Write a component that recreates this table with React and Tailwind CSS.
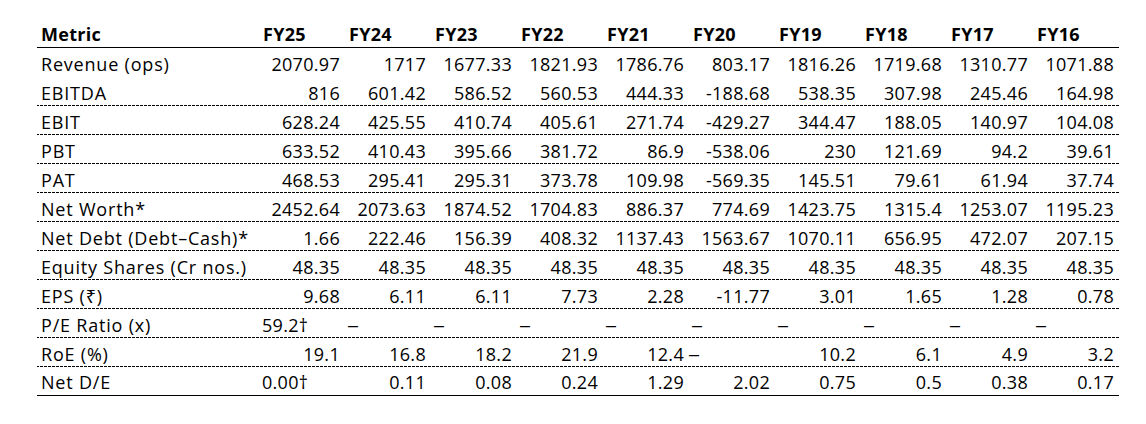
import React from "react";

const years = ["FY25", "FY24", "FY23", "FY22", "FY21", "FY20", "FY19", "FY18", "FY17", "FY16"];

const L = (t) => ({ t, left: true });
const D = { t: "–", left: true, dash: true };

const rows = [
  { label: "Revenue (ops)", border: "none", v: ["2070.97", "1717", "1677.33", "1821.93", "1786.76", "803.17", "1816.26", "1719.68", "1310.77", "1071.88"] },
  { label: "EBITDA", border: "dash", v: ["816", "601.42", "586.52", "560.53", "444.33", "-188.68", "538.35", "307.98", "245.46", "164.98"] },
  { label: "EBIT", border: "dash", v: ["628.24", "425.55", "410.74", "405.61", "271.74", "-429.27", "344.47", "188.05", "140.97", "104.08"] },
  { label: "PBT", border: "dash", v: ["633.52", "410.43", "395.66", "381.72", "86.9", "-538.06", "230", "121.69", "94.2", "39.61"] },
  { label: "PAT", border: "dash", v: ["468.53", "295.41", "295.31", "373.78", "109.98", "-569.35", "145.51", "79.61", "61.94", "37.74"] },
  { label: "Net Worth*", border: "dash", v: ["2452.64", "2073.63", "1874.52", "1704.83", "886.37", "774.69", "1423.75", "1315.4", "1253.07", "1195.23"] },
  { label: "Net Debt (Debt–Cash)*", border: "dash", v: ["1.66", "222.46", "156.39", "408.32", "1137.43", "1563.67", "1070.11", "656.95", "472.07", "207.15"] },
  { label: "Equity Shares (Cr nos.)", border: "dash", v: ["48.35", "48.35", "48.35", "48.35", "48.35", "48.35", "48.35", "48.35", "48.35", "48.35"] },
  { label: "EPS (₹)", border: "dash", v: ["9.68", "6.11", "6.11", "7.73", "2.28", "-11.77", "3.01", "1.65", "1.28", "0.78"] },
  { label: "P/E Ratio (x)", border: "dash", v: [L("59.2†"), D, D, D, D, D, D, D, D, D] },
  { label: "RoE (%)", border: "dash", v: ["19.1", "16.8", "18.2", "21.9", "12.4", { t: "–", left: true, dash: true, shift: true }, "10.2", "6.1", "4.9", "3.2"] },
  { label: "Net D/E", border: "solid", v: [L("0.00†"), "0.11", "0.08", "0.24", "1.29", "2.02", "0.75", "0.5", "0.38", "0.17"] },
];

const gridCols = "grid grid-cols-[222px_repeat(10,86px)]";

function rowBorder(b) {
  if (b === "solid") return "border-b border-black";
  if (b === "dash")
    return "bg-[linear-gradient(to_right,#000_3px,transparent_3px)] bg-[length:4px_1px] bg-repeat-x bg-bottom";
  return "";
}

export default function App() {
  return (
    <div className="w-[1146px] h-[424px] bg-white pl-[37px] pt-[19px] text-black font-['Open_Sans','Noto_Sans',sans-serif] text-[18px] tracking-[0.3px]">
      <div className="w-[1082px]">
        <div className={`${gridCols} h-[29px] border-b border-black font-bold`}>
          <div className="flex items-end pb-[3px] pl-[4px] leading-[20px]">Metric</div>
          {years.map((y) => (
            <div key={y} className="flex items-end pb-[3px] pl-[4px] leading-[20px]">
              {y}
            </div>
          ))}
        </div>
        {rows.map((r) => (
          <div key={r.label} className={`${gridCols} h-[29px] ${rowBorder(r.border)}`}>
            <div className="flex items-end pb-[3px] pl-[4px] leading-[20px] whitespace-nowrap tracking-[0.8px]">{r.label}</div>
            {r.v.map((c, i) => {
              if (typeof c === "string") {
                return (
                  <div key={i} className="flex items-end justify-end pb-[3px] pr-[5px] leading-[20px] whitespace-nowrap">
                    {c}
                  </div>
                );
              }
              return (
                <div
                  key={i}
                  className={`flex items-end justify-start pb-[3px] leading-[20px] whitespace-nowrap ${c.shift ? "pl-0" : "pl-[3px]"} ${c.dash ? "font-['Liberation_Sans',sans-serif]" : ""}`}
                >
                  {c.t}
                </div>
              );
            })}
          </div>
        ))}
      </div>
    </div>
  );
}
